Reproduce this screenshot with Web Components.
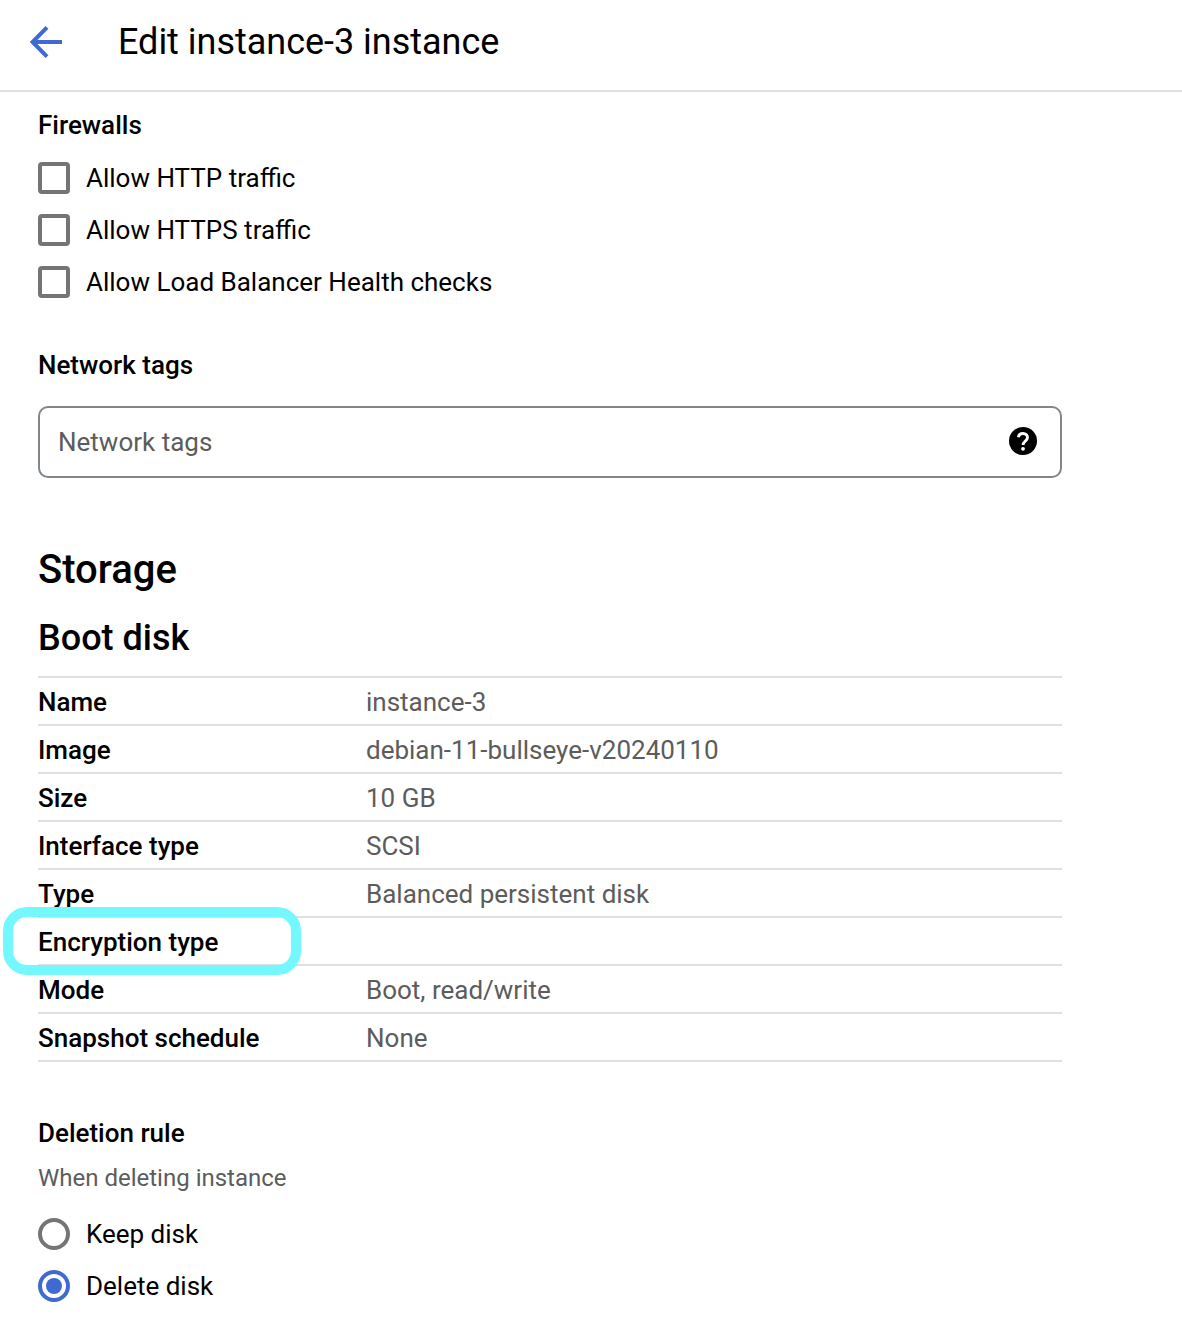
<!DOCTYPE html>
<html lang="en">
<head>
<meta charset="utf-8">
<title>Edit instance</title>
<style>
html, body { margin: 0; background: #fff; }
body { font: 400 26px/32px Roboto, "Liberation Sans", sans-serif; color: #000; }
</style>
</head>
<body>
<edit-page></edit-page>
<script>
const define = (name, html) => {
  const template = document.createElement('template');
  template.innerHTML = html;
  customElements.define(name, class extends HTMLElement {
    constructor() {
      super();
      this.attachShadow({ mode: 'open' }).append(template.content.cloneNode(true));
    }
  });
};

define('page-header', `
<style>
:host { display: flex; align-items: center; gap: 55px; box-sizing: border-box; height: 92px; padding: 0 30px 6px; border-bottom: 2px solid #e0e0e0; }
svg { display: block; flex: none; }
h1 { margin: 0; font-size: 36px; line-height: 44px; font-weight: 400; letter-spacing: -0.02px; }
</style>
<svg width="33" height="32" viewBox="0 0 33 32" fill="none" stroke="#3f69d3" stroke-width="4"><path d="M32 16H3M17 1.4L2.6 16L17 30.6"/></svg>
<h1><slot></slot></h1>`);

define('section-title', `
<style>
:host { display: block; font-weight: 500; }
:host([level="1"]) { font-size: 40px; line-height: 48px; }
:host([level="2"]) { font-size: 36px; line-height: 44px; }
</style><slot></slot>`);

define('check-option', `
<style>
:host { display: flex; align-items: center; gap: 16px; height: 32px; }
i { box-sizing: border-box; width: 32px; height: 32px; border: 4px solid #757575; border-radius: 4px; }
</style><i></i><span><slot></slot></span>`);

define('radio-option', `
<style>
:host { display: flex; align-items: center; gap: 16px; height: 32px; }
i { box-sizing: border-box; display: flex; align-items: center; justify-content: center; width: 32px; height: 32px; border: 4px solid #757575; border-radius: 50%; }
:host([checked]) i { border-color: #3f69d3; }
:host([checked]) i::before { content: ""; width: 16px; height: 16px; border-radius: 50%; background: #3f69d3; }
</style><i></i><span><slot></slot></span>`);

define('option-group', `<style>:host { display: flex; flex-direction: column; gap: 20px; }</style><slot></slot>`);

define('tag-field', `
<style>
:host { display: flex; align-items: center; justify-content: space-between; box-sizing: border-box; height: 72px; padding: 0 23px 0 18px; border: 2px solid #80868b; border-radius: 10px; color: #5c5c5c; }
svg { display: block; margin-bottom: 2px; }
</style>
<span><slot></slot></span>
<svg width="28" height="28" viewBox="0 0 28 28"><circle cx="14" cy="14" r="14"/><path d="M9.400 10.300C9.700 7.900 11.600 6.500 14 6.500C16.700 6.500 18.500 8.200 18.500 10.600C18.500 13.800 14.100 14.300 14.100 18" fill="none" stroke="#fff" stroke-width="2.900"/><circle cx="14" cy="21.800" r="1.900" fill="#fff"/></svg>`);

define('detail-row', `
<style>
:host { display: flex; position: relative; box-sizing: border-box; height: 48px; padding-top: 8px; border-bottom: 2px solid #e0e0e0; color: #5c5c5c; }
b { flex: 0 0 328px; font-weight: 500; color: #000; }
:host([marked]) { z-index: 1; }
:host([marked])::after { content: ""; position: absolute; box-sizing: border-box; left: -35px; top: -11px; width: 298px; height: 68px; border: 10px solid #72f8fe; border-radius: 24px; }
</style><b><slot name="label"></slot></b><span><slot></slot></span>`);

define('detail-table', `<style>:host { display: block; border-top: 2px solid #e0e0e0; }</style><slot></slot>`);

define('edit-page', `
<style>
:host { display: block; height: 1330px; overflow: hidden; }
main { display: flex; flex-direction: column; width: 1024px; padding: 17px 0 0 38px; }
.tags { margin: 51px 0 25px; }
.storage { margin: 68px 0 22px; }
.disk { margin-bottom: 16px; }
.fire { margin-bottom: 21px; }
.rule { margin-top: 55px; }
.hint { margin: 13px 0 24px; font-size: 24px; color: #5c5c5c; }
</style>
<page-header>Edit instance-3 instance</page-header>
<main>
<section-title class="fire">Firewalls</section-title>
<option-group>
<check-option>Allow HTTP traffic</check-option>
<check-option>Allow HTTPS traffic</check-option>
<check-option>Allow Load Balancer Health checks</check-option>
</option-group>
<section-title class="tags">Network tags</section-title>
<tag-field>Network tags</tag-field>
<section-title class="storage" level="1">Storage</section-title>
<section-title class="disk" level="2">Boot disk</section-title>
<detail-table>
<detail-row><span slot="label">Name</span>instance-3</detail-row>
<detail-row><span slot="label">Image</span>debian-11-bullseye-v20240110</detail-row>
<detail-row><span slot="label">Size</span>10 GB</detail-row>
<detail-row><span slot="label">Interface type</span>SCSI</detail-row>
<detail-row><span slot="label">Type</span>Balanced persistent disk</detail-row>
<detail-row marked><span slot="label">Encryption type</span></detail-row>
<detail-row><span slot="label">Mode</span>Boot, read/write</detail-row>
<detail-row><span slot="label">Snapshot schedule</span>None</detail-row>
</detail-table>
<section-title class="rule">Deletion rule</section-title>
<div class="hint">When deleting instance</div>
<option-group>
<radio-option>Keep disk</radio-option>
<radio-option checked>Delete disk</radio-option>
</option-group>
</main>`);
</script>
</body>
</html>
